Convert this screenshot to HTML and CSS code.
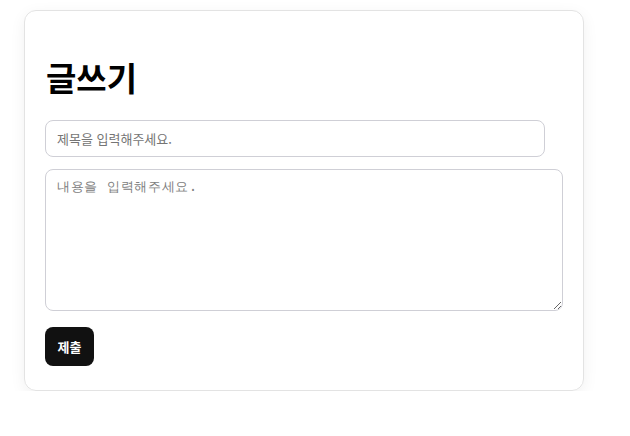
FILE: index.html
```html
<!DOCTYPE html>
<html lang="ko">
<head>
<meta charset="utf-8">
<link rel="stylesheet" href="styles.css">
</head>
<body>
<div class="page">
  <form class="card">
    <h1 class="title">글쓰기</h1>
    <input class="field-title" type="text" placeholder="제목을 입력해주세요.">
    <textarea class="field-body" placeholder="내용을 입력해주세요."></textarea>
    <button class="submit" type="button">제출</button>
  </form>
</div>
</body>
</html>
```
FILE: styles.css
```css
html, body {
  margin: 0;
  padding: 0;
  background: #fff;
}
.page {
  padding: 10px 0 0 24px;
}
.card {
  box-sizing: border-box;
  width: 560px;
  height: 381px;
  border: 1px solid #e3e3e3;
  border-radius: 12px;
  box-shadow: 0 4px 16px rgba(0, 0, 0, 0.06);
  padding: 20px 20px;
  display: flex;
  flex-direction: column;
  align-items: flex-start;
  font-family: "Noto Sans CJK KR", "Noto Sans", sans-serif;
}
.title {
  margin: 27px 0 24px 1px;
  font-size: 33px;
  line-height: 38px;
  font-weight: 700;
  color: #000;
  font-family: "Noto Sans CJK KR", sans-serif;
}
.field-title {
  box-sizing: border-box;
  width: 500px;
  height: 37px;
  margin: 0;
  padding: 0 11px;
  border: 1px solid #cfcfd6;
  border-radius: 8px;
  font-family: "Noto Sans CJK KR", sans-serif;
  font-size: 13px;
  outline: none;
}
.field-title::placeholder {
  color: #757575;
}
.field-body {
  box-sizing: border-box;
  width: 518px;
  height: 142px;
  margin: 12px 0 0 0;
  padding: 8px 11px;
  border: 1px solid #cfcfd6;
  border-radius: 8px;
  font-family: monospace;
  font-size: 13.33px;
  letter-spacing: 0.7px;
  outline: none;
  resize: vertical;
}
.field-body::placeholder {
  color: #808080;
}
.submit {
  margin-top: 16px;
  width: 49px;
  height: 39px;
  border: none;
  border-radius: 8px;
  background: #111;
  color: #fff;
  font-family: "Noto Sans CJK KR", sans-serif;
  font-weight: 700;
  font-size: 13px;
  padding: 0;
}
```
